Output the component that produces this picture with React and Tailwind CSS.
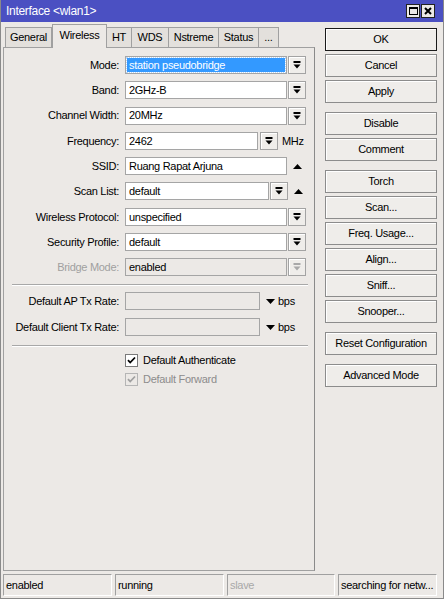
import React from 'react';

function DropIcon({ disabled }) {
    const c = disabled ? '#a8a8a8' : '#000';
    return (
        <svg width="8" height="8" viewBox="0 0 8 8">
            <rect x="0.5" y="0" width="7" height="2" fill={c} />
            <path d="M0.5 3.5h7L4 7.5z" fill={c} />
        </svg>
    );
}

function DropBtn({ disabled }) {
    return (
        <div className="w-[18px] h-[18px] flex items-center justify-center bg-[#efedea] border border-[#a3a3a3] shadow-[inset_1px_1px_0_#ffffff]">
            <DropIcon disabled={disabled} />
        </div>
    );
}

function UpArrow() {
    return (
        <svg width="9" height="5" viewBox="0 0 9 5" className="ml-[6px]">
            <path d="M0 5h9L4.5 0z" fill="#000" />
        </svg>
    );
}

function DownArrow() {
    return (
        <svg width="9" height="5" viewBox="0 0 9 5" className="ml-[6px]">
            <path d="M0 0h9L4.5 5z" fill="#000" />
        </svg>
    );
}

function Input({ value, w, gray, selected }) {
    return (
        <div className={`h-[18px] border border-[#a5a5a5] flex items-center ${gray ? 'bg-[#ece9e6]' : 'bg-white'}`} style={{ width: w }}>
            {selected ? (
                <div className="mx-[1px] h-[14px] flex-1 bg-[#3399ff] text-white pl-[2px] flex items-center outline-1 outline-dotted outline-[#bcd8f8]">{value}</div>
            ) : (
                <span className="pl-[3px]">{value}</span>
            )}
        </div>
    );
}

function Row({ label, grayLabel, children }) {
    return (
        <div className="flex items-center h-[18px]">
            <div className={`w-[121px] text-right pr-[6px] ${grayLabel ? 'text-[#a0a0a0]' : ''}`}>{label}</div>
            <div className="flex items-center">{children}</div>
        </div>
    );
}

function Separator() {
    return (
        <div className="ml-[8px] mr-[6px] border-t border-t-[#a8a8a8] border-b border-b-white" />
    );
}

function Check({ label, disabled }) {
    const c = disabled ? '#a0a0a0' : '#000';
    return (
        <div className={`flex items-center h-[14px] ml-[121px] ${disabled ? 'text-[#8c8c8c]' : ''}`}>
            <div className={`w-[13px] h-[13px] border ${disabled ? 'border-[#b5b5b5] bg-[#ece9e6]' : 'border-[#7a7a7a] bg-white'} flex items-center justify-center`}>
                <svg width="9" height="9" viewBox="0 0 9 9">
                    <path d="M1 4.2l2.2 2.3L8 1.5" stroke={c} strokeWidth="1.8" fill="none" />
                </svg>
            </div>
            <span className="ml-[5px]">{label}</span>
        </div>
    );
}

function Btn({ label, def, className = '' }) {
    return (
        <div className={`h-[23px] w-[112px] flex items-center justify-center bg-[#efedea] border ${def ? 'border-[#1a1a1a]' : 'border-[#8c8c8c]'} shadow-[inset_1px_1px_0_#ffffff] ${className}`}>
            {label}
        </div>
    );
}

const tabs = [
    { name: 'General', w: 47 },
    { name: 'Wireless', w: 55, active: true },
    { name: 'HT', w: 26 },
    { name: 'WDS', w: 38 },
    { name: 'Nstreme', w: 51 },
    { name: 'Status', w: 41 },
    { name: '...', w: 21 },
];

export default function App() {
    return (
        <div className="w-[444px] h-[599px] bg-[#ece9e6] flex flex-col text-[11px] tracking-[-0.3px] text-black font-['Liberation_Sans',Arial,sans-serif] border-x border-b border-[#8a8a8a] overflow-hidden">
            {/* title bar */}
            <div className="h-[22px] bg-[#4b50c2] flex items-center pl-[5px] pr-[8px] text-white text-[12px]">
                <span className="flex-1">Interface &lt;wlan1&gt;</span>
                <div className="flex gap-[1px]">
                    <div className="w-[14px] h-[14px] bg-[#ece9e6] border border-[#222] flex items-center justify-center">
                        <div className="w-[9px] h-[8px] border border-t-2 border-black" />
                    </div>
                    <div className="w-[14px] h-[14px] bg-[#ece9e6] border border-[#222] flex items-center justify-center">
                        <svg width="8" height="8" viewBox="0 0 8 8">
                            <path d="M1 1l6 6M7 1l-6 6" stroke="#000" strokeWidth="2" />
                        </svg>
                    </div>
                </div>
            </div>

            <div className="flex-1 flex">
                {/* left side */}
                <div className="ml-[2px] w-[312px] flex flex-col">
                    <div className="h-[25px] flex items-end pl-[2px] relative z-10">
                        {tabs.map(t => (
                            <div
                                key={t.name}
                                className={`flex items-center justify-center border-x border-t border-[#a0a0a0] ${t.active ? 'h-[24px] bg-[#ece9e6] -mb-[1px] pb-[3px] border-b-0' : 'h-[20px] bg-[#e3e0dc] -ml-[1px] first:ml-0'}`}
                                style={{ width: t.w }}
                            >
                                {t.name}
                            </div>
                        ))}
                    </div>
                    <div className="flex-1 border border-[#a0a0a0] border-r-[#8a8a8a] flex flex-col pt-[8px]">
                        <div className="flex flex-col gap-[7.3px]">
                            <Row label="Mode:">
                                <Input value="station pseudobridge" w={162} selected />
                                <div className="ml-[1px]"><DropBtn /></div>
                            </Row>
                            <Row label="Band:">
                                <Input value="2GHz-B" w={162} />
                                <div className="ml-[1px]"><DropBtn /></div>
                            </Row>
                            <Row label="Channel Width:">
                                <Input value="20MHz" w={162} />
                                <div className="ml-[1px]"><DropBtn /></div>
                            </Row>
                            <Row label="Frequency:">
                                <Input value="2462" w={133} />
                                <div className="ml-[2px]"><DropBtn /></div>
                                <span className="ml-[4px]">MHz</span>
                            </Row>
                            <Row label="SSID:">
                                <Input value="Ruang Rapat Arjuna" w={162} />
                                <UpArrow />
                            </Row>
                            <Row label="Scan List:">
                                <Input value="default" w={144} />
                                <div className="ml-[1px]"><DropBtn /></div>
                                <UpArrow />
                            </Row>
                            <Row label="Wireless Protocol:">
                                <Input value="unspecified" w={162} />
                                <div className="ml-[1px]"><DropBtn /></div>
                            </Row>
                            <Row label="Security Profile:">
                                <Input value="default" w={162} />
                                <div className="ml-[1px]"><DropBtn /></div>
                            </Row>
                            <Row label="Bridge Mode:" grayLabel>
                                <Input value="enabled" w={162} gray />
                                <div className="ml-[1px]"><DropBtn disabled /></div>
                            </Row>
                        </div>

                        <div className="mt-[8px]"><Separator /></div>

                        <div className="flex flex-col gap-[8px] mt-[6px]">
                            <Row label="Default AP Tx Rate:">
                                <Input value="" w={135} gray />
                                <DownArrow />
                                <span className="ml-[3px]">bps</span>
                            </Row>
                            <Row label="Default Client Tx Rate:">
                                <Input value="" w={135} gray />
                                <DownArrow />
                                <span className="ml-[3px]">bps</span>
                            </Row>
                        </div>

                        <div className="mt-[9px]"><Separator /></div>

                        <div className="flex flex-col gap-[5px] mt-[6px]">
                            <Check label="Default Authenticate" />
                            <Check label="Default Forward" disabled />
                        </div>
                    </div>
                </div>

                {/* right buttons */}
                <div className="ml-[10px] pt-[6px] flex flex-col">
                    <Btn label="OK" def />
                    <Btn label="Cancel" className="mt-[3px]" />
                    <Btn label="Apply" className="mt-[3px]" />
                    <Btn label="Disable" className="mt-[9px]" />
                    <Btn label="Comment" className="mt-[3px]" />
                    <Btn label="Torch" className="mt-[9px]" />
                    <Btn label="Scan..." className="mt-[3px]" />
                    <Btn label="Freq. Usage..." className="mt-[3px]" />
                    <Btn label="Align..." className="mt-[3px]" />
                    <Btn label="Sniff..." className="mt-[3px]" />
                    <Btn label="Snooper..." className="mt-[3px]" />
                    <Btn label="Reset Configuration" className="mt-[9px]" />
                    <Btn label="Advanced Mode" className="mt-[9px]" />
                </div>
            </div>

            {/* status bar */}
            <div className="h-[22px] mt-[3px] mb-[2px] px-[2px] flex gap-[3px]">
                {[
                    { t: 'enabled', w: 109 },
                    { t: 'running', w: 109 },
                    { t: 'slave', w: 108, gray: true },
                    { t: 'searching for netw...', w: 99 },
                ].map(c => (
                    <div
                        key={c.t}
                        className={`h-full flex items-center pl-[2px] border border-t-[#a0a0a0] border-l-[#a0a0a0] border-b-white border-r-white ${c.gray ? 'text-[#a8a8a8]' : ''}`}
                        style={{ width: c.w }}
                    >
                        {c.t}
                    </div>
                ))}
                <div className="flex-1" />
            </div>
        </div>
    );
}
